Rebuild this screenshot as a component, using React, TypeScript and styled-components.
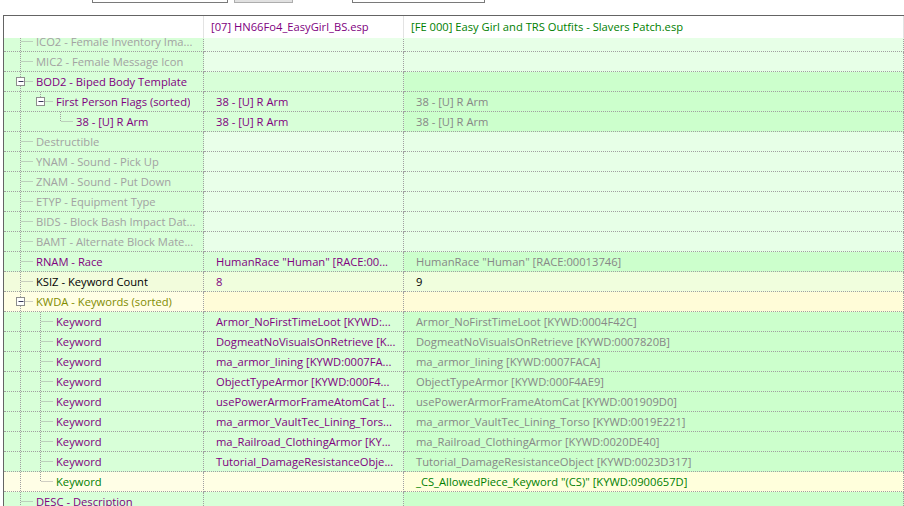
import React from 'react';
import styled, { createGlobalStyle } from 'styled-components';

type Tone = 'gray' | 'dim' | 'purple' | 'black' | 'olive' | 'green';
type Shade = 'empty' | 'value' | 'count' | 'array' | 'added';

interface IRecordRow {
  name: string;
  level: number;
  tone: Tone;
  shade: Shade;
  guides?: number[];
  box?: boolean;
  last?: boolean;
  left?: string;
  leftTone?: Tone;
  right?: string;
  rightTone?: Tone;
}

const toneColor: Record<Tone, string> = {
  gray: '#a2a2a2',
  dim: '#878787',
  purple: '#800080',
  black: '#000000',
  olive: '#7f8c00',
  green: '#008000',
};

// background per column: name, left file, right file
const shadeColors: Record<Shade, [string, string, string]> = {
  empty: ['#d8ffd8', '#e9ffe9', '#e7ffe7'],
  value: ['#d8ffd8', '#d8ffd8', '#ccffcc'],
  count: ['#f2fcdc', '#f0fedd', '#f0fedd'],
  array: ['#fffee4', '#fffcd8', '#fffcd8'],
  added: ['#fffee6', '#ffffe4', '#ffffdc'],
};

const GlobalStyle = createGlobalStyle`
  html, body {
    margin: 0;
    padding: 0;
    background: #ffffff;
  }
  body {
    font-family: "Open Sans", "Noto Sans", sans-serif;
    font-size: 11.2px;
  }
`;

const Window = styled.div`
  width: 904px;
  height: 506px;
  display: flex;
  flex-direction: column;
  overflow: hidden;
  background: #ffffff;
`;

const Toolbar = styled.div`
  height: 15px;
  display: flex;
  overflow: hidden;
  flex-shrink: 0;
`;

const ToolField = styled.div<{ $width: number; $gap: number; $button?: boolean }>`
  width: ${(p) => p.$width}px;
  height: 20px;
  margin-top: -17px;
  margin-left: ${(p) => p.$gap}px;
  box-sizing: border-box;
  border: 1px solid ${(p) => (p.$button ? '#adadad' : '#7a7a7a')};
  background: ${(p) => (p.$button ? '#e1e1e1' : '#ffffff')};
`;

const Grid = styled.div`
  flex: 1;
  min-height: 0;
  margin-left: 3px;
  border-left: 1px solid #646464;
  border-top: 1px solid #646464;
  overflow: hidden;
  display: flex;
  flex-direction: column;
`;

const Columns = styled.div`
  display: grid;
  grid-template-columns: 200px 200px 1fr;
`;

const HeaderRow = styled(Columns)`
  height: 22px;
  flex-shrink: 0;
  background: #ffffff;
`;

const HeadCell = styled.div<{ $color: string }>`
  border-right: 1px solid #e3e3e3;
  padding-left: 7px;
  line-height: 22px;
  color: ${(p) => p.$color};
  white-space: nowrap;
  overflow: hidden;
`;

// scrolled list area; the first row is partly above the top edge
const Viewport = styled.div`
  flex: 1;
  min-height: 0;
  overflow: hidden;
`;

const Body = styled.div`
  margin-top: -6px;
`;

const Row = styled(Columns)`
  height: 20px;
`;

const Cell = styled.div<{ $bg: string; $color?: string }>`
  display: flex;
  align-items: center;
  height: 19px;
  line-height: 19px;
  background: ${(p) => p.$bg};
  color: ${(p) => p.$color || '#000000'};
  border-bottom: 1px dotted #a0a0a0;
  border-right: 1px dotted #a0a0a0;
  white-space: nowrap;
  overflow: hidden;
`;

const ValueCell = styled(Cell)`
  padding-left: 12px;
`;

const Gutter = styled.svg`
  flex-shrink: 0;
  overflow: visible;
`;

const Label = styled.span`
  overflow: hidden;
`;

const dot = { stroke: '#a0a0a0', strokeWidth: 1, strokeDasharray: '1 1' };

const TreeLines: React.FC<{ row: IRecordRow }> = ({ row }) => {
  const { level, guides = [], box, last } = row;
  const x = 16.5 + 20 * level;
  const width = 32 + 20 * level;
  return (
    <Gutter width={width} height={19}>
      {guides.map((l) => (
        <line key={l} x1={16.5 + 20 * l} y1={0} x2={16.5 + 20 * l} y2={20} {...dot} />
      ))}
      <line x1={x} y1={0} x2={x} y2={last ? (box ? 5 : 10) : 20} {...dot} />
      {box ? (
        <>
          <rect x={x - 4} y={5.5} width={8} height={8} fill="#ffffff" stroke="#8e8e8e" />
          <line x1={x - 2} y1={9.5} x2={x + 3} y2={9.5} stroke="#3a3a5a" />
          <line x1={x + 5} y1={9.5} x2={width - 3} y2={9.5} {...dot} />
        </>
      ) : (
        <line x1={x + 1} y1={9.5} x2={width - 3} y2={9.5} {...dot} />
      )}
    </Gutter>
  );
};

const keywordPairs: [string, string][] = [
  ['Armor_NoFirstTimeLoot [KYWD:...', 'Armor_NoFirstTimeLoot [KYWD:0004F42C]'],
  ['DogmeatNoVisualsOnRetrieve [K...', 'DogmeatNoVisualsOnRetrieve [KYWD:0007820B]'],
  ['ma_armor_lining [KYWD:0007FA...', 'ma_armor_lining [KYWD:0007FACA]'],
  ['ObjectTypeArmor [KYWD:000F4...', 'ObjectTypeArmor [KYWD:000F4AE9]'],
  ['usePowerArmorFrameAtomCat [...', 'usePowerArmorFrameAtomCat [KYWD:001909D0]'],
  ['ma_armor_VaultTec_Lining_Tors...', 'ma_armor_VaultTec_Lining_Torso [KYWD:0019E221]'],
  ['ma_Railroad_ClothingArmor [KY...', 'ma_Railroad_ClothingArmor [KYWD:0020DE40]'],
  ['Tutorial_DamageResistanceObje...', 'Tutorial_DamageResistanceObject [KYWD:0023D317]'],
];

const empty = (name: string): IRecordRow => ({ name, level: 0, tone: 'gray', shade: 'empty' });

const rows: IRecordRow[] = [
  empty('ICO2 - Female Inventory Ima...'),
  empty('MIC2 - Female Message Icon'),
  { name: 'BOD2 - Biped Body Template', level: 0, tone: 'purple', shade: 'value', box: true },
  {
    name: 'First Person Flags (sorted)',
    level: 1,
    tone: 'purple',
    shade: 'value',
    guides: [0],
    box: true,
    last: true,
    left: '38 - [U] R Arm',
    leftTone: 'purple',
    right: '38 - [U] R Arm',
    rightTone: 'dim',
  },
  {
    name: '38 - [U] R Arm',
    level: 2,
    tone: 'purple',
    shade: 'value',
    guides: [0],
    last: true,
    left: '38 - [U] R Arm',
    leftTone: 'purple',
    right: '38 - [U] R Arm',
    rightTone: 'dim',
  },
  empty('Destructible'),
  empty('YNAM - Sound - Pick Up'),
  empty('ZNAM - Sound - Put Down'),
  empty('ETYP - Equipment Type'),
  empty('BIDS - Block Bash Impact Dat...'),
  empty('BAMT - Alternate Block Mate...'),
  {
    name: 'RNAM - Race',
    level: 0,
    tone: 'purple',
    shade: 'value',
    left: 'HumanRace "Human" [RACE:00...',
    leftTone: 'purple',
    right: 'HumanRace "Human" [RACE:00013746]',
    rightTone: 'dim',
  },
  {
    name: 'KSIZ - Keyword Count',
    level: 0,
    tone: 'black',
    shade: 'count',
    left: '8',
    leftTone: 'purple',
    right: '9',
    rightTone: 'black',
  },
  { name: 'KWDA - Keywords (sorted)', level: 0, tone: 'olive', shade: 'array', box: true },
  ...keywordPairs.map(
    ([left, right]): IRecordRow => ({
      name: 'Keyword',
      level: 1,
      tone: 'purple',
      shade: 'value',
      guides: [0],
      left,
      leftTone: 'purple',
      right,
      rightTone: 'dim',
    })
  ),
  {
    name: 'Keyword',
    level: 1,
    tone: 'green',
    shade: 'added',
    guides: [0],
    last: true,
    right: '_CS_AllowedPiece_Keyword "(CS)" [KYWD:0900657D]',
    rightTone: 'green',
  },
  { name: 'DESC - Description', level: 0, tone: 'purple', shade: 'value' },
];

const RecordRow: React.FC<{ row: IRecordRow }> = ({ row }) => {
  const [nameBg, leftBg, rightBg] = shadeColors[row.shade];
  return (
    <Row>
      <Cell $bg={nameBg} $color={toneColor[row.tone]}>
        <TreeLines row={row} />
        <Label>{row.name}</Label>
      </Cell>
      <ValueCell $bg={leftBg} $color={row.leftTone && toneColor[row.leftTone]}>
        {row.left}
      </ValueCell>
      <ValueCell $bg={rightBg} $color={row.rightTone && toneColor[row.rightTone]}>
        {row.right}
      </ValueCell>
    </Row>
  );
};

const App: React.FC = () => (
  <Window>
    <GlobalStyle />
    <Toolbar>
      <ToolField $width={136} $gap={92} />
      <ToolField $width={59} $gap={6} $button />
      <ToolField $width={133} $gap={59} />
    </Toolbar>
    <Grid>
      <HeaderRow>
        <HeadCell $color="#000000" />
        <HeadCell $color="#800080">[07] HN66Fo4_EasyGirl_BS.esp</HeadCell>
        <HeadCell $color="#008000">[FE 000] Easy Girl and TRS Outfits - Slavers Patch.esp</HeadCell>
      </HeaderRow>
      <Viewport>
        <Body>
          {rows.map((row, i) => (
            <RecordRow key={i} row={row} />
          ))}
        </Body>
      </Viewport>
    </Grid>
  </Window>
);

export default App;
